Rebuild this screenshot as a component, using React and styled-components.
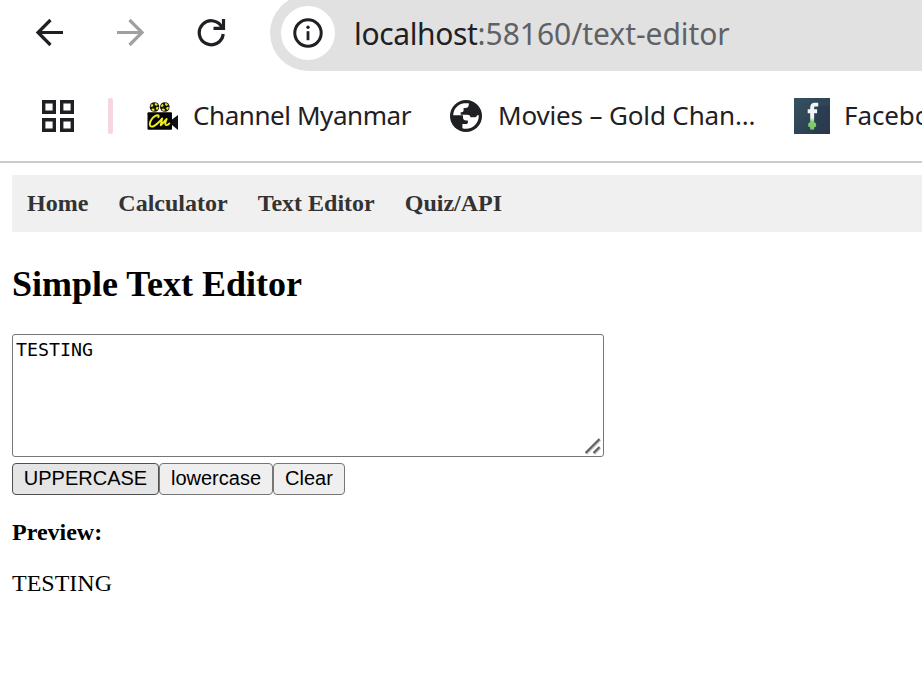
import React, { useState } from "react";
import styled, { createGlobalStyle } from "styled-components";

const GlobalStyle = createGlobalStyle`
  * { box-sizing: border-box; }
  html, body { margin: 0; background: #fff; overflow: hidden; }
`;

const Window = styled.div`
  width: 100%;
  height: 675px;
  overflow: hidden;
  background: #fff;
`;

const BrowserChrome = styled.header`
  height: 163px;
  border-bottom: 2px solid #cbcbcb;
  overflow: hidden;
  font-family: "Noto Sans", "Open Sans", sans-serif;
  color: #1f2024;
`;

const Toolbar = styled.div`
  display: flex;
  height: 71px;
`;

const ToolbarIcons = styled.div`
  display: flex;
  flex: none;
  gap: 51px;
  width: 270px;
  padding: 18px 0 0 35px;
`;

const Icon = styled.svg`
  display: block;
  flex: none;
  width: ${(p) => p.$w}px;
  height: ${(p) => p.$h || p.$w}px;
`;

const AddressBar = styled.div`
  display: flex;
  flex: 1;
  align-items: center;
  height: 76px;
  margin-top: -5px;
  padding-left: 11px;
  border-radius: 38px 0 0 38px;
  background: #e1e1e1;
`;

const SiteInfo = styled.div`
  display: grid;
  place-items: center;
  width: 54px;
  height: 54px;
  margin-right: 19px;
  border-radius: 50%;
  background: #fff;
`;

const Url = styled.div`
  padding-top: 2px;
  font-size: 30px;
  line-height: 40px;
  letter-spacing: -0.35px;
  white-space: nowrap;
`;

const UrlPath = styled.span`
  color: #606164;
  letter-spacing: -0.05px;
`;

const Bookmarks = styled.div`
  display: flex;
  align-items: center;
  height: 90px;
  padding-left: 41px;
  white-space: nowrap;
`;

const Divider = styled.div`
  flex: none;
  width: 5px;
  height: 36px;
  margin: 0 34px 0 33px;
  border-radius: 2px;
  background: #f7d6e4;
`;

const Bookmark = styled.div`
  display: flex;
  flex: none;
  align-items: center;
  gap: ${(p) => p.$gap}px;
  width: ${(p) => p.$width}px;
`;

const BookmarkLabel = styled.span`
  padding-bottom: 2px;
  font-size: 26px;
  line-height: 36px;
  letter-spacing: ${(p) => p.$spacing}px;
`;

const Page = styled.main`
  padding: 12px 0 0 12px;
  color: #000;
  font-family: "Liberation Serif", serif;
  font-size: 24px;
`;

const Nav = styled.nav`
  display: flex;
  gap: 30px;
  height: 57px;
  padding: 0 15px;
  background: #f0f0f0;
`;

const NavLink = styled.a`
  color: #333;
  font-weight: 700;
  line-height: 57px;
  text-decoration: none;
  white-space: nowrap;
`;

const Title = styled.h2`
  margin: 32px 0 29px;
  font-size: 36px;
  line-height: 41px;
`;

const EditorFrame = styled.div`
  position: relative;
  width: 592px;
  height: 123px;
`;

const Editor = styled.textarea`
  display: block;
  width: 100%;
  height: 100%;
  margin: 0;
  padding: 3px;
  border: 1px solid #767676;
  border-radius: 3px;
  outline: none;
  resize: none;
  background: #fff;
  color: #000;
  font: 18.27px/24px "DejaVu Sans Mono", monospace;
`;

const ResizeGrip = styled.svg`
  position: absolute;
  right: 2px;
  bottom: 2px;
  width: 17px;
  height: 17px;
  pointer-events: none;
`;

const Buttons = styled.div`
  display: flex;
  margin-top: 6px;
`;

const Button = styled.button`
  width: ${(p) => p.$width}px;
  height: 32px;
  padding: 0 0 2px;
  border: 1px solid ${(p) => (p.$hot ? "#4f4f4f" : "#767676")};
  border-radius: 4px;
  background: ${(p) => (p.$hot ? "#e5e5e5" : "#efefef")};
  color: #000;
  font: 20px/28px "Liberation Sans", sans-serif;
  white-space: nowrap;
`;

const PreviewLabel = styled.h4`
  margin: 24px 0 0;
  font-size: 24px;
  line-height: 27px;
`;

const PreviewText = styled.p`
  margin: 24px 0 0;
  line-height: 27px;
`;

const BackIcon = () => (
  <Icon $w={30} viewBox="0 0 30 30" fill="none" stroke="#1f2024" strokeWidth="3.2">
    <path d="M28 14.5H3.5M15.5 2 3 14.5 15.5 27" />
  </Icon>
);

const ForwardIcon = () => (
  <Icon $w={30} viewBox="0 0 30 30" fill="none" stroke="#a0a0a1" strokeWidth="3.2">
    <path d="M1 14.5h24.5M13.5 2 26 14.5 13.5 27" />
  </Icon>
);

const ReloadIcon = () => (
  <Icon $w={30} viewBox="0 0 30 30" fill="none" stroke="#1f2024" strokeWidth="3.2">
    <path d="M25.2 9.8A12 12 0 1 0 26.2 16" />
    <path d="M26.5 1v9.4H16.5" />
  </Icon>
);

const InfoIcon = () => (
  <Icon $w={30} viewBox="0 0 30 30">
    <circle cx="15" cy="15" r="13.2" fill="none" stroke="#1f2024" strokeWidth="3" />
    <circle cx="15" cy="9.3" r="1.7" fill="#1f2024" />
    <path d="M13.6 13.2h2.8v9h-2.8z" fill="#1f2024" />
  </Icon>
);

const AppsIcon = () => (
  <Icon $w={34} viewBox="0 0 34 34" fill="none" stroke="#1f2024" strokeWidth="3.4">
    <path d="M2.7 2.7h10.6v10.6H2.7zM20.7 2.7h10.6v10.6H20.7zM2.7 20.7h10.6v10.6H2.7zM20.7 20.7h10.6v10.6H20.7z" />
  </Icon>
);

const Reel = ({ cx }) => (
  <>
    <circle cx={cx} cy="5" r="4.8" fill="#151506" />
    <circle cx={cx} cy="5" r="3" fill="none" stroke="#e8e12d" strokeWidth="2.1" strokeDasharray="2.6 2.1" />
  </>
);

const CameraIcon = () => (
  <Icon $w={31} $h={29} viewBox="0 0 31 29">
    <Reel cx={7.5} />
    <Reel cx={17.8} />
    <rect x="0.5" y="10.2" width="24.5" height="17.6" rx="1" fill="#050505" />
    <path d="M25 17.5 31 13v15l-6-5z" fill="#111" />
    <path
      d="M11.3 15.2c1.2-1.7-.5-2.5-3-1.3C4.3 16 1.8 21.5 3.3 23.8c1.7 2 5.7-.6 9.2-4.3l2.7-3.1-1.5 6.9 6-6.3c-1.5 3.5-2.2 6.3 0 6.1 1.3-.1 2-.9 2.7-1.7"
      fill="none" stroke="#f1ed20" strokeWidth="1.9" strokeLinecap="round" strokeLinejoin="round"
    />
  </Icon>
);

const GlobeIcon = () => (
  <Icon $w={32} viewBox="0 0 32 32">
    <circle cx="16" cy="16" r="16" fill="#1f2024" />
    <path d="M3.2 15.2C3.5 9 8 4 14 3.3h4.800v1.400c0 2-1.400 3.300-3.400 3.300h-1.800v2.300c0 1.200-.8 2-2 2h-.9v2.500h6.500c1.800 0 2.900.8 3.300 2.400h4.100c1.200 0 2-.6 2.500-2h1.700C29 22.500 23.500 28.800 16 28.800c-1.400 0-2.500-.1-3.600-.5v-4.200h3.800c1.100 0 1.700-.7 1.700-1.800v-1.700h-1.700c-1.900 0-3.200-1.200-3.200-3v-2.400z" fill="#fff" />
  </Icon>
);

const FacebookIcon = () => (
  <Icon $w={36} viewBox="0 0 36 36">
    <defs>
      <linearGradient id="tile" x1="0" y1="0" x2="1" y2="1">
        <stop offset="0" stopColor="#365160" />
        <stop offset="1" stopColor="#29394c" />
      </linearGradient>
      <linearGradient id="letter" x1="0" y1="0" x2="0" y2="1">
        <stop offset="0.55" stopColor="#f3f5f8" />
        <stop offset="0.72" stopColor="#7dca6b" />
      </linearGradient>
    </defs>
    <path d="M0 0h36v36H0z" fill="url(#tile)" />
    <path d="M24 8h12v28H18z" fill="#293a4f" opacity=".65" />
    <path d="M24.2 4.8h-3.5c-3 0-4.500 1.700-4.500 4.700v1.800h-2.500v4h2.500v8.600l-2 1.500v3l2 1v2h3.900v-2l2-1v-3l-2-1.400v-8.700h3v-4h-3V9.600c0-.8.500-1 1.200-1h2.900z" fill="url(#letter)" />
  </Icon>
);

const links = ["Home", "Calculator", "Text Editor", "Quiz/API"];

export default function App() {
  const [text, setText] = useState("TESTING");
  return (
    <Window>
      <GlobalStyle />
      <BrowserChrome>
        <Toolbar>
          <ToolbarIcons>
            <BackIcon />
            <ForwardIcon />
            <ReloadIcon />
          </ToolbarIcons>
          <AddressBar>
            <SiteInfo><InfoIcon /></SiteInfo>
            <Url>localhost<UrlPath>:58160/text-editor</UrlPath></Url>
          </AddressBar>
        </Toolbar>
        <Bookmarks>
          <AppsIcon />
          <Divider />
          <Bookmark $gap={15} $width={303}>
            <CameraIcon />
            <BookmarkLabel $spacing={-0.43}>Channel Myanmar</BookmarkLabel>
          </Bookmark>
          <Bookmark $gap={16} $width={344}>
            <GlobeIcon />
            <BookmarkLabel $spacing={-0.15}>Movies – Gold Chan...</BookmarkLabel>
          </Bookmark>
          <Bookmark $gap={14} $width={170}>
            <FacebookIcon />
            <BookmarkLabel $spacing={-0.1}>Facebook</BookmarkLabel>
          </Bookmark>
        </Bookmarks>
      </BrowserChrome>
      <Page>
        <Nav>
          {links.map((label) => <NavLink key={label}>{label}</NavLink>)}
        </Nav>
        <Title>Simple Text Editor</Title>
        <EditorFrame>
          <Editor value={text} spellCheck={false} onChange={(e) => setText(e.target.value)} />
          <ResizeGrip viewBox="0 0 17 17" fill="none">
            <path d="M1.5 16 15.5 2M9.5 16 15.5 10" stroke="#c8c8c8" strokeWidth="2" />
            <path d="M.5 15 14.5 1M8.5 15 14.5 9" stroke="#626262" strokeWidth="2.2" />
          </ResizeGrip>
        </EditorFrame>
        <Buttons>
          <Button $width={147} $hot onClick={() => setText(text.toUpperCase())}>UPPERCASE</Button>
          <Button $width={114} onClick={() => setText(text.toLowerCase())}>lowercase</Button>
          <Button $width={72} onClick={() => setText("")}>Clear</Button>
        </Buttons>
        <PreviewLabel>Preview:</PreviewLabel>
        <PreviewText>{text}</PreviewText>
      </Page>
    </Window>
  );
}
